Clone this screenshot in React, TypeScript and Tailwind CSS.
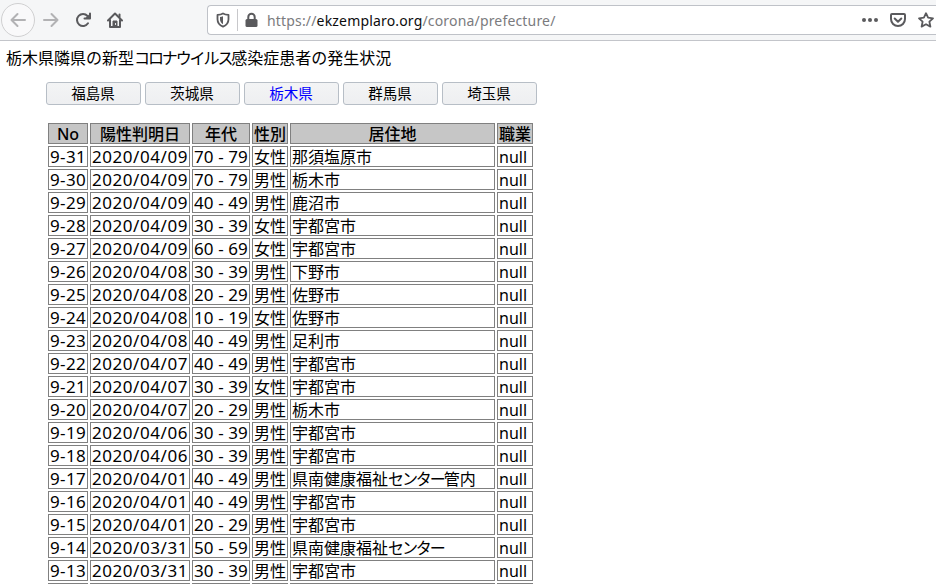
import React from "react";

const prefectures = ["福島県", "茨城県", "栃木県", "群馬県", "埼玉県"];

const columns = [
  { label: "No", width: "w-[40px]", text: "text-[17px] leading-[19px] tracking-[0.35px]" },
  { label: "陽性判明日", width: "w-[100px]", text: "text-[17px] leading-[19px] tracking-[0.55px]" },
  { label: "年代", width: "w-[58px]", text: "text-[17px] leading-[19px] tracking-[0.1px]" },
  { label: "性別", width: "w-[36px]", text: "leading-[21px]" },
  { label: "居住地", width: "w-[205px]", text: "leading-[21px]" },
  { label: "職業", width: "w-[36px]", text: "leading-[21px]" },
];

const patients = [
  ["9-31", "2020/04/09", "70 - 79", "女性", "那須塩原市", "null"],
  ["9-30", "2020/04/09", "70 - 79", "男性", "栃木市", "null"],
  ["9-29", "2020/04/09", "40 - 49", "男性", "鹿沼市", "null"],
  ["9-28", "2020/04/09", "30 - 39", "女性", "宇都宮市", "null"],
  ["9-27", "2020/04/09", "60 - 69", "女性", "宇都宮市", "null"],
  ["9-26", "2020/04/08", "30 - 39", "男性", "下野市", "null"],
  ["9-25", "2020/04/08", "20 - 29", "男性", "佐野市", "null"],
  ["9-24", "2020/04/08", "10 - 19", "女性", "佐野市", "null"],
  ["9-23", "2020/04/08", "40 - 49", "男性", "足利市", "null"],
  ["9-22", "2020/04/07", "40 - 49", "男性", "宇都宮市", "null"],
  ["9-21", "2020/04/07", "30 - 39", "女性", "宇都宮市", "null"],
  ["9-20", "2020/04/07", "20 - 29", "男性", "栃木市", "null"],
  ["9-19", "2020/04/06", "30 - 39", "男性", "宇都宮市", "null"],
  ["9-18", "2020/04/06", "30 - 39", "男性", "宇都宮市", "null"],
  ["9-17", "2020/04/01", "40 - 49", "男性", "県南健康福祉センター管内", "null"],
  ["9-16", "2020/04/01", "40 - 49", "男性", "宇都宮市", "null"],
  ["9-15", "2020/04/01", "20 - 29", "男性", "宇都宮市", "null"],
  ["9-14", "2020/03/31", "50 - 59", "男性", "県南健康福祉センター", "null"],
  ["9-13", "2020/03/31", "30 - 39", "男性", "宇都宮市", "null"],
  ["", "", "", "", "", ""],
];

// Katakana runs are set tighter than the kanji around them
const JapaneseText = ({ text }: { text: string }) => (
  <>
    {text.split(/([ァ-ヶー]+)/).map((part, i) =>
      i % 2 === 1 ? (
        <span key={i} className="tracking-[-2.1px]">
          {part}
        </span>
      ) : (
        part
      )
    )}
  </>
);

const Toolbar = () => (
  <header className="flex h-[41px] shrink-0 items-start border-b border-[#c3c5ca] bg-[#f5f6f7] text-[#5a5a5d]">
    <div className="flex w-[207px] shrink-0 items-center pt-[3px] pl-[1px]">
      <div className="flex h-[34px] w-[34px] items-center justify-center rounded-full border border-[#d0d0d1] bg-[#f9f9fa] text-[#b2b2b4]">
        <svg width="16" height="16" viewBox="0 0 16 16" fill="none" stroke="currentColor" strokeWidth="2" strokeLinecap="round" strokeLinejoin="round">
          <path d="M15 8H1.5M7.5 2l-6 6 6 6" />
        </svg>
      </div>
      <svg className="ml-[8px] text-[#b2b2b4]" width="16" height="16" viewBox="0 0 16 16" fill="none" stroke="currentColor" strokeWidth="2" strokeLinecap="round" strokeLinejoin="round">
        <path d="M1 8h13.5M8.5 2l6 6-6 6" />
      </svg>
      <svg className="ml-[16px]" width="16" height="16" viewBox="0 0 16 16" fill="none" stroke="currentColor" strokeWidth="2" strokeLinecap="round">
        <path d="M12.5 4A6 6 0 1 0 13 11.3" />
        <path d="M15 1.500v5h-5.500" strokeLinejoin="round" />
        <path d="M14.500 2v4h-4z" fill="currentColor" stroke="none" />
      </svg>
      <svg className="ml-[16px]" width="16" height="16" viewBox="0 0 16 16" fill="none" stroke="currentColor" strokeWidth="2" strokeLinejoin="round" strokeLinecap="round">
        <path d="M1 8.500l7-7 7 7M3 8v7h10V8" />
        <path d="M6 14V9h4v5" fill="currentColor" strokeWidth="1" />
        <path d="M8.500 11.500v1" stroke="#f5f6f7" strokeWidth="1" />
        <path d="M12.500 2.500v2.500" />
      </svg>
    </div>
    <div className="mt-[5px] flex h-[30px] flex-1 items-center rounded-l-[4px] border border-r-0 border-[#bfc2c8] bg-white pl-[8px]">
      <svg width="14" height="16" viewBox="0 0 14 16">
        <path d="M7 1.500c1.700 1 3.400 1.300 5.500 1.400v4.300c0 3.600-2 6-5.500 7.500-3.500-1.500-5.500-3.900-5.500-7.500V2.900C3.600 2.800 5.300 2.500 7 1.500z" fill="none" stroke="currentColor" strokeWidth="1.800" strokeLinejoin="round" />
        <path d="M7 4.200v8C5 11 4 9.600 4 7.300V5c1.200-.1 2-.3 3-.8z" fill="currentColor" />
      </svg>
      <div className="ml-[7px] h-[22px] w-px bg-[#c8c8cb]" />
      <svg className="ml-[7px]" width="13" height="16" viewBox="0 0 13 16">
        <path d="M3.300 8V5a3.200 3.200 0 0 1 6.400 0v3" fill="none" stroke="currentColor" strokeWidth="2" />
        <rect x="0.500" y="7" width="12" height="8" rx="1.500" fill="currentColor" />
      </svg>
      <div className="ml-[9px] flex-1 whitespace-nowrap font-['Noto_Sans',sans-serif] text-[14px] tracking-[0.17px] text-[#7b7b7e]">
        https://<span className="text-[#0c0c0d]">ekzemplaro.org</span>/corona/prefecture/
      </div>
      <svg width="16" height="16" viewBox="0 0 16 16" fill="currentColor">
        <circle cx="2" cy="8" r="2" />
        <circle cx="8" cy="8" r="2" />
        <circle cx="14" cy="8" r="2" />
      </svg>
      <svg className="ml-[12px]" width="16" height="16" viewBox="0 0 16 16" fill="none" stroke="currentColor" strokeWidth="2" strokeLinecap="round" strokeLinejoin="round">
        <path d="M2 2h12a1 1 0 0 1 1 1v4a7 7 0 0 1-14 0V3a1 1 0 0 1 1-1z" />
        <path d="M4.700 6.500L8 9.700l3.300-3.200" />
      </svg>
      <svg className="mr-[2px] ml-[12px]" width="16" height="16" viewBox="0 0 16 16" fill="none" stroke="currentColor" strokeWidth="1.800" strokeLinejoin="round">
        <path d="M8 1.200l2.100 4.500 4.900.6-3.600 3.400 1 4.900L8 12.200l-4.400 2.400 1-4.900L1 6.300l4.900-.6z" />
      </svg>
    </div>
  </header>
);

const App = (): React.ReactNode => {
  return (
    <div className="flex h-screen flex-col overflow-hidden bg-white font-['Noto_Sans','Noto_Sans_CJK_JP',sans-serif] text-[16px] text-black">
      <Toolbar />

      <main lang="ja" className="min-h-0 flex-1 overflow-hidden">
        <p className="mt-[6px] ml-[6px] h-[22px] leading-[22px]">
          <JapaneseText text="栃木県隣県の新型コロナウイルス感染症患者の発生状況" />
        </p>

        <nav className="mt-[13px] ml-[46px] flex gap-1">
          {prefectures.map((name) => (
            <button
              key={name}
              className={`h-[23px] w-[95px] rounded-[3px] border border-[#b7bec6] bg-linear-to-b from-[#f3f4f5] to-[#eeeff1] pr-px pb-px text-[14.5px] leading-[20px] ${
                name === "栃木県" ? "text-[#0000ff]" : "text-black"
              }`}
            >
              {name}
            </button>
          ))}
        </nav>

        <table className="mt-[16px] ml-[46px] w-[489px] table-fixed border-separate border-spacing-[2px] whitespace-nowrap leading-[21px]">
          <thead>
            <tr className="h-[21px]">
              {columns.map((col) => (
                <th key={col.label} className={`${col.width} border border-[#808080] bg-[#c6c6c6] p-0 font-medium`}>
                  <div className="h-[19px]">{col.label}</div>
                </th>
              ))}
            </tr>
          </thead>
          <tbody>
            {patients.map((row, i) => (
              <tr key={i} className="h-[21px]">
                {row.map((cell, j) => (
                  <td key={j} className={`border border-[#808080] p-0 pl-px ${columns[j].text}`}>
                    <div className="h-[19px]">
                      <JapaneseText text={cell} />
                    </div>
                  </td>
                ))}
              </tr>
            ))}
          </tbody>
        </table>
      </main>
    </div>
  );
};

export default App;
